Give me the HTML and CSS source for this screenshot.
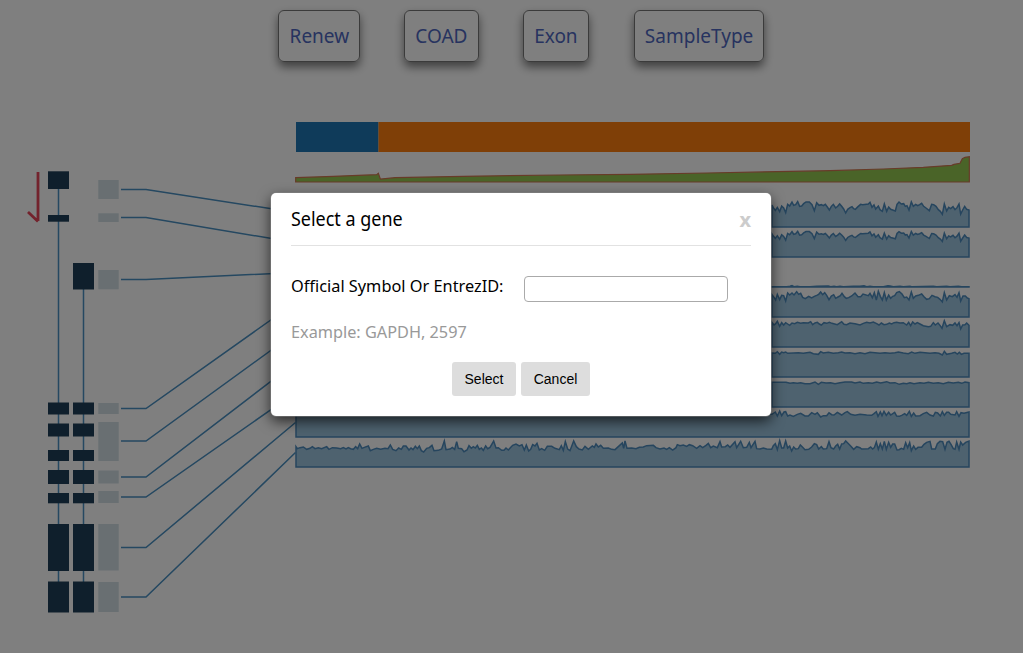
FILE: index.html
```html
<!DOCTYPE html>
<html lang="en">
<head>
<meta charset="utf-8">
<title>Gene viewer</title>
<link rel="stylesheet" href="styles.css">
</head>
<body>
<nav class="toolbar">
  <a class="tool renew"><span>Renew</span></a>
  <a class="tool coad"><span>COAD</span></a>
  <a class="tool exon"><span>Exon</span></a>
  <a class="tool sample"><span>SampleType</span></a>
</nav>
<svg class="chart" viewBox="0 62 1023 591" width="1023" height="591">
  <path class="arrow" d="M38 172V221M28 212L38 221.5"/>
  <path class="link" d="M58.500 180V600M83.500 270V600"/>
  <g id="links"></g>
  <g id="exons"></g>
  <rect x="296" y="122" width="82.500" height="30" fill="#1f77b4"/>
  <rect x="378.500" y="122" width="591.500" height="30" fill="#ff7f0e"/>
  <g id="rows"></g>
</svg>
<div class="overlay"></div>
<section class="modal">
  <header class="modal-head"><h1>Select a gene</h1><span class="close">x</span></header>
  <div class="field"><label for="gene">Official Symbol Or EntrezID:</label><input id="gene" type="text"></div>
  <p class="hint">Example: GAPDH, 2597</p>
  <div class="actions"><button class="select">Select</button><button class="cancel">Cancel</button></div>
</section>
<script src="script.js"></script>
</body>
</html>
```
FILE: styles.css
```css
* { box-sizing: border-box; }
body { margin: 0; height: 653px; overflow: hidden; position: relative; background: #fff; font-family: "Noto Sans", sans-serif; }
.toolbar { display: flex; height: 62px; padding: 10px 0 0 278px; }
.tool { height: 52px; border: 1px solid #777; border-radius: 6px; padding-bottom: 2px; display: flex; align-items: center; justify-content: center; font-size: 20px; color: #4e67c0; box-shadow: 0 5px 10px rgba(0,0,0,.5); white-space: nowrap; }
.renew { width: 82px; margin-right: 44px; }
.coad { width: 75px; margin-right: 44px; }
.exon { width: 66px; margin-right: 45px; }
.sample { width: 130px; }
.tool span { transform: scaleX(.95); }
.chart { display: block; }
.arrow { fill: none; stroke: #e6465a; stroke-width: 2.8; }
.link { fill: none; stroke: #4a90c2; stroke-width: 1.5; }
.exon-box { fill: #1e3e58; }
.union-box { fill: #d2dee5; }
.area { fill: #9cc4de; stroke: #4c8abc; stroke-width: 1.5; }
.area.green { fill: #94c850; stroke: #ce7650; stroke-width: 1.2; }
.overlay { position: absolute; inset: 0; background: rgba(0,0,0,.5); }
.modal { position: absolute; left: 271px; top: 193px; width: 500px; height: 223px; padding: 0 20px; background: #fff; border-radius: 5px; box-shadow: 0 0 0 .5px #888, 0 5px 14px rgba(0,0,0,.7); }
.modal-head { height: 53px; border-bottom: 1px solid #e2e2e2; display: flex; align-items: center; justify-content: space-between; }
h1 { margin: 0; font-size: 19px; font-weight: 400; transform: scaleX(.945); transform-origin: left; }
.close { font-size: 20px; font-weight: 700; color: #ccc; line-height: 24px; padding-top: 1px; }
.field { display: flex; padding-top: 30px; height: 74px; }
.field label { width: 233px; flex: none; font-size: 17px; line-height: 20px; transform: scaleX(.96); transform-origin: left; white-space: nowrap; }
.field input { width: 204px; height: 26px; border: 1px solid #aaa; border-radius: 4px; padding: 0 8px; outline: 0; }
.hint { margin: 0; height: 42px; color: #999; font-size: 17px; line-height: 24px; transform: scaleX(.957); transform-origin: left; }
.actions { display: flex; justify-content: center; gap: 5px; }
button { height: 34px; padding: 0; border: 0; border-radius: 3px; background: #ddd; color: #000; font: 14px "Liberation Sans", Arial, sans-serif; }
.select { width: 64px; }
.cancel { width: 69px; }
```
FILE: script.js
```js
const NS = 'http://www.w3.org/2000/svg';
function add(parent, tag, attrs) {
  const el = document.createElementNS(NS, tag);
  for (const k in attrs) el.setAttribute(k, attrs[k]);
  document.getElementById(parent).appendChild(el);
}
// Samples are stored in thirds of a pixel, relative to a block origin.
function pts(ox, oy, text) {
  return text.trim().split(/\s+/).map(p => {
    const [x, y] = p.split(',').map(Number);
    return [ox + x / 3, oy + y / 3];
  });
}
function area(p, base, cls) {
  const last = p[p.length - 1][0];
  add('rows', 'path', { class: cls || 'area', d: 'M' + p.map(a => a[0].toFixed(2) + ' ' + a[1].toFixed(2)).join('L') + 'V' + base + 'H' + p[0][0] + 'Z' });
}
function box(x, w, y1, y2, cls) { add('exons', 'rect', { x, y: y1, width: w, height: y2 - y1, class: cls }); }

const shared = [[402.5,414.5],[423.5,436.5],[450,461],[470,484],[493,503.3],[524,571],[581.5,612.5]];
[[171.3,189],[215,221.7],...shared].forEach(([a, b]) => box(48, 21, a, b, 'exon-box'));
[[263,289.5],...shared].forEach(([a, b]) => box(73, 21, a, b, 'exon-box'));
[[180,199],[213.300,222],[270,289.300],[403,414],[422,461],[470.500,483.500],[491,503],[524,570.500],[582,612]].forEach(([a, b]) => box(98.3, 20.4, a, b, 'union-box'));
[189.5,217.5,279.5,408.5,441,477,497,547.5,597].forEach((y, i) =>
  add('links', 'path', { class: 'link', d: `M121 ${y}H146L295.5 ${212.5 + 30 * i}` }));

area([...pts(280,110,'47,203 160,199 290,194 295,190 301,207 345,203 550,199 835,195 1050,193'),
  ...pts(630,110,'230,189 440,185 600,182 760,177 880,172 965,166 972,163 990,160 997,146 1005,142 1018,140')], 182, 'area green');

const r1 = pts(760,190,`36,45 40,53 46,61 52,52 59,65 65,48 71,54 77,68 83,43 89,48 96,36 101,46 107,44 113,35 119,49 125,48 131,41 138,36 148,36 156,44 163,62 170,38 177,46 184,44 190,47 196,43 202,51 208,60 214,49 220,43 227,54 233,49 239,42 245,49 251,57 257,69 263,58 270,53 276,50 281,56 286,58 294,50 302,43 308,44 325,42 330,37 336,52 342,45 347,57 355,48 360,59 367,64 373,42 380,64 386,51 392,58 398,60 406,63 411,43 417,36 424,42 431,41 436,49 441,47 447,60 454,36 460,49 467,43 473,47 479,44 485,40 491,49 498,54 508,62 515,43 521,44 528,49 535,59 541,64 547,73 553,42 560,63 566,52 572,56 579,50 585,59 591,53 597,42 602,72 608,60 614,49 620,58 627,60`);
const r2 = r1.map(([x, y]) => [x, 231.6 + (y - 202) * 0.8]);
const r4 = pts(760,190,`36,314 42,322 47,330 52,313 59,329 65,316 71,317 77,333 83,309 89,315 96,309 102,315 110,305 116,313 122,310 128,322 136,326 146,319 155,324 163,319 170,316 176,313 182,306 188,314 194,308 200,316 207,329 214,318 221,314 227,325 234,321 241,317 246,310 253,320 259,325 266,323 275,318 285,309 294,320 302,320 309,312 325,317 330,310 337,323 343,308 349,330 355,304 361,319 367,330 373,308 379,330 386,315 392,325 398,319 404,317 410,308 418,305 426,312 433,323 440,321 447,330 454,306 460,325 467,318 475,316 485,312 492,320 500,328 508,326 516,316 525,320 533,322 540,328 547,336 553,308 560,330 568,317 577,320 585,314 591,322 597,308 602,333 609,318 616,318 622,324 627,326`);
const r3 = pts(760,190,`36,290 80,290 90,289 96,287 102,290 112,289 120,290 150,290 170,289 205,288 212,290 222,289 230,290 240,289 250,290 280,289 300,289 312,287 320,290 330,289 340,290 370,290 384,287 390,288 400,290 420,289 430,290 450,289 455,290 520,289 530,290 560,289 570,290 595,289 605,290 627,290`);
const r5 = pts(760,315,`36,22 42,30 47,26 52,19 59,34 65,23 71,30 77,23 83,27 89,31 96,24 104,26 112,22 122,25 130,23 145,24 152,20 158,29 165,24 172,22 178,27 184,30 192,23 200,25 208,22 216,25 224,27 232,29 245,20 252,28 260,29 270,24 285,26 300,30 310,25 320,22 330,24 340,21 350,26 357,30 364,24 372,29 380,28 388,24 395,27 402,23 410,22 420,24 430,23 440,30 446,22 452,32 458,21 465,27 472,23 480,27 490,32 505,35 512,34 520,23 526,30 534,24 540,31 546,40 553,17 560,35 570,29 578,31 585,24 591,32 597,23 602,42 608,30 615,29 620,24 627,31`);
const r6 = pts(760,315,`36,114 46,115 52,110 59,118 65,111 71,113 77,111 83,115 100,114 115,113 130,115 140,113 150,112 160,116 175,118 182,110 190,114 205,112 220,115 235,113 245,111 255,114 270,113 285,116 300,113 315,116 330,112 345,113 360,115 375,113 390,115 405,113 415,111 430,114 445,116 455,111 465,115 480,112 495,113 510,115 525,113 537,115 547,120 553,109 560,118 575,115 585,112 592,117 598,112 604,118 612,115 627,115`);
const r7 = pts(760,315,`36,202 78,202 90,205 100,203 112,205 122,203 135,206 150,206 165,201 175,208 184,202 198,204 212,203 225,206 240,203 255,201 275,201 285,204 300,201 310,205 325,203 337,205 350,201 362,204 380,200 390,204 405,203 418,208 430,205 440,206 450,203 462,206 480,203 492,205 505,202 520,205 535,203 550,206 565,202 580,204 595,202 605,205 615,201 627,203`);
const r8 = pts(760,315,`-1392,297 36,298 46,291 52,303 59,288 65,302 72,291 77,290 83,303 90,300 100,304 112,298 122,295 135,303 145,303 155,293 165,298 172,293 182,306 190,302 200,302 207,293 215,299 222,300 232,292 245,300 255,293 262,290 272,298 285,301 300,298 320,300 335,301 342,296 349,290 354,304 361,291 366,302 372,289 379,301 386,292 392,300 404,292 410,303 418,304 425,301 434,296 440,301 448,289 454,304 461,294 467,303 480,302 490,296 500,292 510,300 520,303 526,292 533,294 541,303 547,290 553,301 560,292 566,292 572,298 585,300 590,290 597,304 603,293 612,295 627,291`);
const r9 = [
 ...pts(260,340,`108,320 112,326 120,323 130,321 140,328 150,325 157,320 165,326 175,323 185,326 200,320 207,328 217,323 230,324 242,326 250,323 258,327 265,323 272,326 280,328 287,320 293,326 299,312 306,325 313,322 325,318 331,332 340,328 350,325 362,328 375,325 384,326 391,315 398,328 408,332 416,324 424,328 430,318 438,318 447,330 453,324 459,329 466,319 472,326 478,318 484,332 491,336 500,325 508,323 516,316 522,332 535,331 545,327 553,303 558,329 570,327 577,322 584,328 590,305 595,325 605,326 612,335 621,330 627,317 634,325 640,320 646,324 652,316 658,328 664,324 670,331 677,318 683,326 690,322 701,303 708,324 715,323 725,331 732,331 738,324 745,330 751,323 758,316 768,312 778,318 786,314 793,330 799,315 806,333 812,328 818,314 825,318 831,310 838,330 845,326 854,331 862,319 875,319 885,325 898,329 904,317 910,331 916,305 923,327 930,332 941,303 949,320 957,327 967,330 975,319 985,328 997,318 1003,322 1008,312 1015,321 1022,316 1030,325 1045,324 1055,328 1065,329`),
 ...pts(500,180,`367,789 371,805 375,783 381,805 395,804 408,806 418,802 430,801 440,797 460,796 468,803 480,807 492,804 500,808 508,803 518,810 528,803 532,794 540,797 550,795 560,799 568,794 578,797 590,805 600,797 608,803 618,796 625,790 632,803 640,798 652,803 660,785 665,801 676,800 683,795 690,802 705,785 710,803 722,784 730,803 740,802 748,787 753,803 765,784 770,806`),
 ...pts(760,315,`0,402 10,399 20,402 35,403 40,392 46,386 52,404 59,377 65,399 71,399 77,378 83,399 89,393 95,408 101,396 107,402 115,401 121,390 128,397 135,404 146,403 155,396 163,386 170,389 176,402 184,395 190,402 200,401 207,380 213,398 221,402 227,393 233,388 239,402 245,387 251,386 257,378 264,385 272,393 281,403 290,395 300,398 305,402 325,401 332,396 338,402 343,398 349,381 355,403 361,386 367,402 373,379 379,403 386,382 392,397 398,387 404,387 411,405 417,404 424,400 431,403 437,383 443,398 449,383 454,407 461,393 467,403 474,397 485,397 492,388 500,382 510,379 515,402 526,402 532,386 540,379 548,380 555,403 561,382 567,379 573,388 580,401 585,403 590,381 597,403 602,381 608,390 617,382 627,378`)];
[r1, r2, r3, r4, r5, r6, r7, r8, r9].forEach((r, i) => area(r, 227 + i * 30));
```
